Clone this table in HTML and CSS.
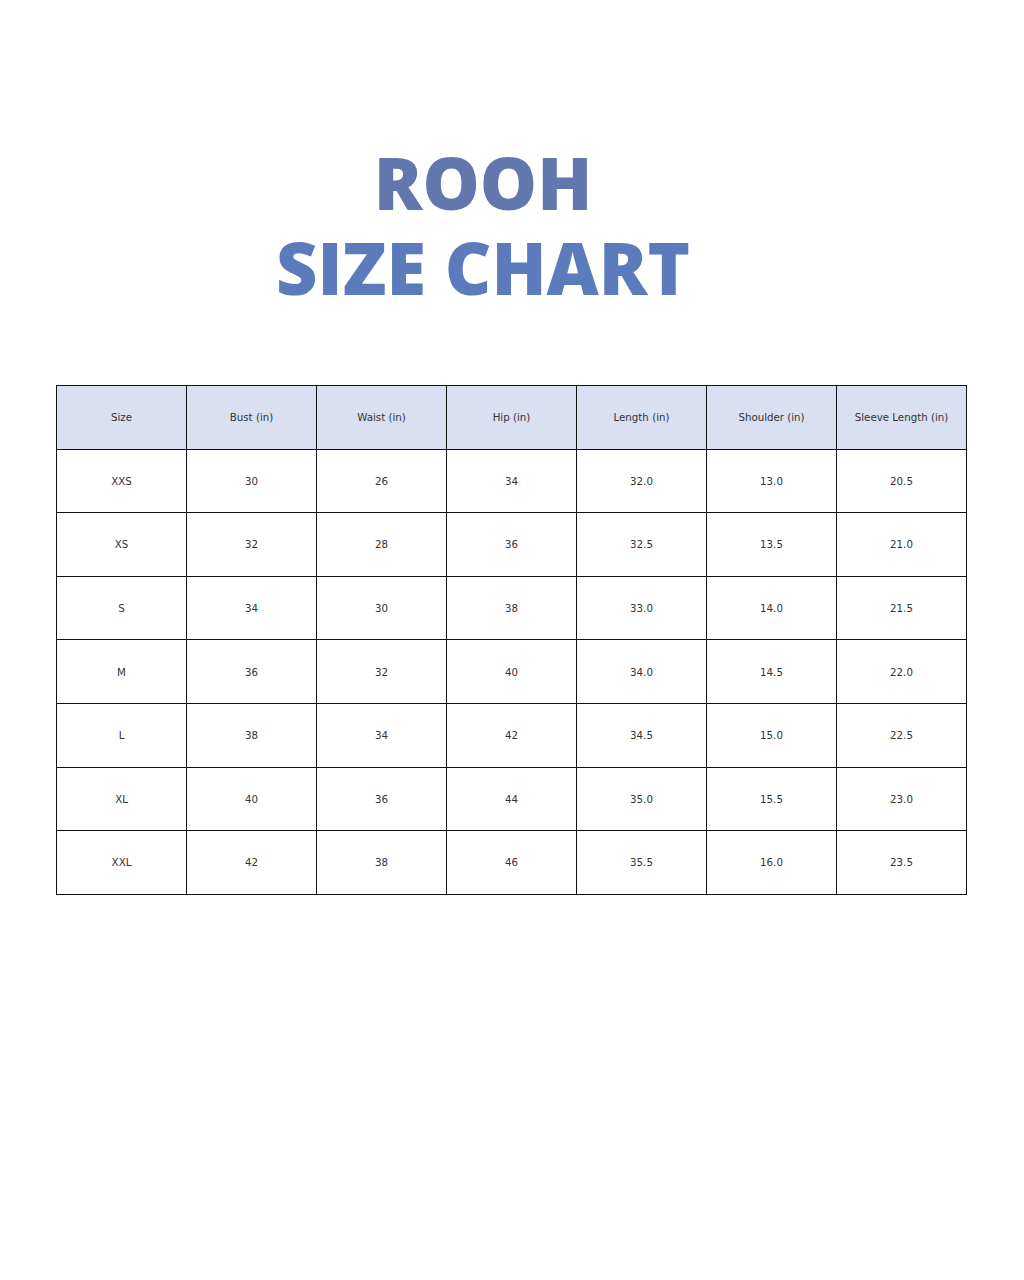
FILE: index.html
```html
<!DOCTYPE html>
<html>
<head>
<meta charset="utf-8">
<link rel="stylesheet" href="styles.css">
</head>
<body>
<div class="page">
  <h1 class="title"><span class="brand">ROOH</span><span class="sub">SIZE CHART</span></h1>
  <table class="chart">
    <thead>
      <tr><th>Size</th><th>Bust (in)</th><th>Waist (in)</th><th>Hip (in)</th><th>Length (in)</th><th>Shoulder (in)</th><th>Sleeve Length (in)</th></tr>
    </thead>
    <tbody>
      <tr><td>XXS</td><td>30</td><td>26</td><td>34</td><td>32.0</td><td>13.0</td><td>20.5</td></tr>
      <tr><td>XS</td><td>32</td><td>28</td><td>36</td><td>32.5</td><td>13.5</td><td>21.0</td></tr>
      <tr><td>S</td><td>34</td><td>30</td><td>38</td><td>33.0</td><td>14.0</td><td>21.5</td></tr>
      <tr><td>M</td><td>36</td><td>32</td><td>40</td><td>34.0</td><td>14.5</td><td>22.0</td></tr>
      <tr><td>L</td><td>38</td><td>34</td><td>42</td><td>34.5</td><td>15.0</td><td>22.5</td></tr>
      <tr><td>XL</td><td>40</td><td>36</td><td>44</td><td>35.0</td><td>15.5</td><td>23.0</td></tr>
      <tr><td>XXL</td><td>42</td><td>38</td><td>46</td><td>35.5</td><td>16.0</td><td>23.5</td></tr>
    </tbody>
  </table>
</div>
</body>
</html>
```
FILE: styles.css
```css
html, body { margin: 0; padding: 0; background: #fff; }
.page {
  width: 1024px;
  height: 1280px;
  display: flex;
  flex-direction: column;
  align-items: flex-start;
}
.title {
  margin: 140px 0 0 0;
  width: 966px;
  display: flex;
  flex-direction: column;
  align-items: center;
  font-family: "Open Sans", sans-serif;
  font-weight: 800;
  font-size: 72px;
  line-height: 85px;
  letter-spacing: 0;
}
.brand { color: #6277ad; }
.sub { color: #5b7bbd; }
.chart {
  margin: 75px 0 0 56px;
  border-collapse: collapse;
  table-layout: fixed;
  width: 911px;
  font-family: "DejaVu Sans", sans-serif;
  font-size: 10.25px;
  color: #333;
}
.chart th, .chart td {
  border: 1px solid #111;
  height: 62.6px;
  padding: 0;
  text-align: center;
  vertical-align: middle;
  font-weight: normal;
}
.chart th { background: #dae0f1; }
```
